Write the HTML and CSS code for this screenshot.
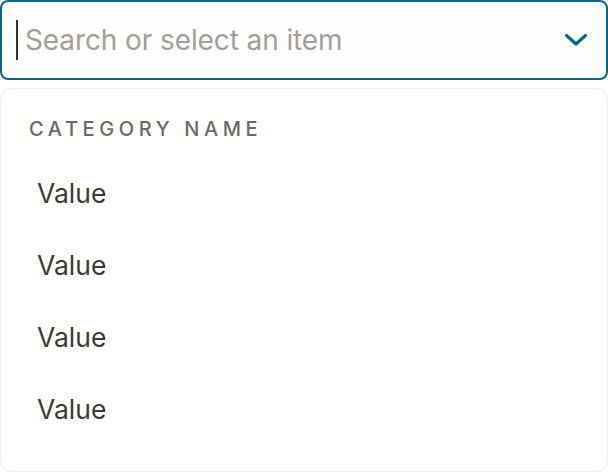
FILE: index.html
```html
<!DOCTYPE html>
<html>
<head>
<meta charset="utf-8">
<link rel="stylesheet" href="styles.css">
</head>
<body>
<div class="combo">
  <div class="field">
    <span class="caret"></span>
    <span class="placeholder">Search or select an item</span>
    <svg class="chevron" width="24" height="14" viewBox="0 0 24 14">
      <path d="M2.5 2.5 L12 11 L21.5 2.5" fill="none" stroke="#0b6780" stroke-width="3.2" stroke-linecap="round" stroke-linejoin="round"/>
    </svg>
  </div>
  <div class="panel">
    <div class="category">CATEGORY NAME</div>
    <ul class="options">
      <li class="option">Value</li>
      <li class="option">Value</li>
      <li class="option">Value</li>
      <li class="option">Value</li>
    </ul>
  </div>
</div>
</body>
</html>
```
FILE: styles.css
```css
html, body {
  margin: 0;
  padding: 0;
  background: #ffffff;
}
body {
  font-family: Inter, "Noto Sans", sans-serif;
  width: 608px;
  height: 472px;
  overflow: hidden;
}
.combo {
  display: flex;
  flex-direction: column;
  gap: 8px;
}
.field {
  box-sizing: border-box;
  height: 80px;
  border: 2px solid #0b6780;
  border-radius: 8px;
  display: flex;
  align-items: center;
  padding: 0 18px 0 14px;
  background: #fdfdfd;
  box-shadow: inset 0 4px 8px rgba(0,0,0,0.04);
}
.caret {
  width: 2px;
  height: 40px;
  background: #3a302b;
  margin-right: 7px;
  flex: none;
}
.placeholder {
  flex: 1;
  font-size: 28px;
  color: #a49d98;
  letter-spacing: -0.1px;
}
.chevron {
  flex: none;
}
.panel {
  box-sizing: border-box;
  height: 384px;
  border: 1px solid #efefef;
  border-radius: 12px;
  background: #fff;
  padding: 28px 0 0 0;
  box-shadow: 0 1px 3px rgba(0,0,0,0.04);
}
.category {
  font-size: 20px;
  font-weight: 500;
  letter-spacing: 4.6px;
  color: #6f6864;
  line-height: 24px;
  padding-left: 28px;
  margin-bottom: 16px;
}
.options {
  list-style: none;
  margin: 0;
  padding: 0;
}
.option {
  height: 72px;
  line-height: 72px;
  font-size: 26.5px;
  color: #3d3935;
  padding-left: 36px;
}
```
